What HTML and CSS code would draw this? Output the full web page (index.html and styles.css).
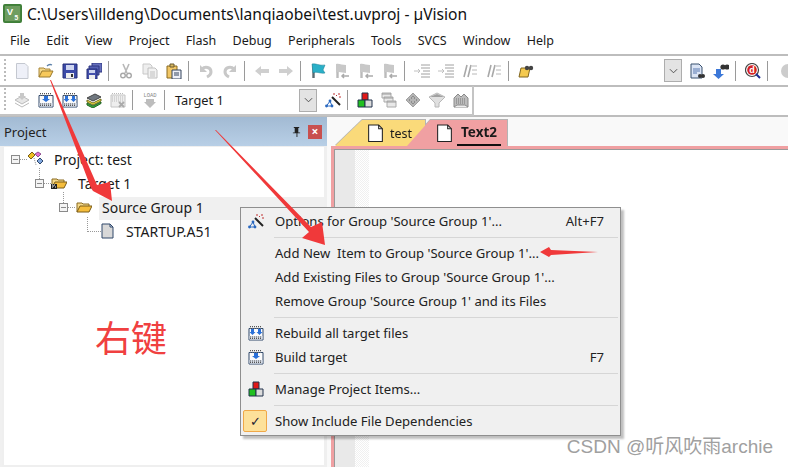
FILE: index.html
```html
<!DOCTYPE html>
<html lang="en">
<head>
<meta charset="utf-8">
<title>µVision</title>
<link rel="stylesheet" href="styles.css">
</head>
<body>
<svg class="defs" width="0" height="0">
  <defs>
    <symbol id="i-new" viewBox="0 0 16 16"><path d="M2.500 .5H11l3 3v12H2.500z" fill="#eef0f8" stroke="#c4c8d0"/></symbol>
    <symbol id="i-open" viewBox="0 0 16 16"><path d="M1 14V5h5l1 1h5v2" fill="#f5d98a" stroke="#a8863a"/><path d="M1 14l3-6h11l-3 6z" fill="#f7c95c" stroke="#9a7a2e"/><path d="M9 3c2-2 3-2 5-1" fill="none" stroke="#5a7fa8" stroke-width="1.300"/></symbol>
    <symbol id="i-save" viewBox="0 0 16 16"><path d="M1 1h14v14H1z" fill="#3c4aa8" stroke="#252f78"/><path d="M4 2h8v5H4z" fill="#cfd6f0"/><path d="M4 10h8v5H4z" fill="#eee"/><path d="M9 11h2v3H9z" fill="#333"/></symbol>
    <symbol id="i-saveall" viewBox="0 0 16 16"><path d="M6 0h10v9H6z" fill="#6670bc" stroke="#2e3680"/><path d="M3 3h10v9H3z" fill="#5560b4" stroke="#2e3680"/><path d="M1 6h10v10H1z" fill="#4450ac" stroke="#252f78"/><path d="M3 7h6v3H3z" fill="#cfd6f0"/><path d="M3 12h6v4H3z" fill="#eee"/></symbol>
    <symbol id="i-cut" viewBox="0 0 16 16"><path d="M5 1l4 9M11 1L7 10" stroke="#b8b8b8" stroke-width="1.600" fill="none"/><circle cx="5" cy="12.500" r="2.300" fill="none" stroke="#a8a8a8" stroke-width="1.400"/><circle cx="11" cy="12.500" r="2.300" fill="none" stroke="#a8a8a8" stroke-width="1.400"/></symbol>
    <symbol id="i-copy" viewBox="0 0 16 16"><path d="M1 1h7l2 2v8H1z" fill="#eee" stroke="#c8c8c8"/><path d="M6 5h7l2 2v8H6z" fill="#f2f2f2" stroke="#c0c0c0"/><path d="M8 9h5M8 11h5M8 13h5" stroke="#c0c0c0"/></symbol>
    <symbol id="i-paste" viewBox="0 0 16 16"><path d="M1 3h10v12H1z" fill="#f2c766" stroke="#8a6a20"/><path d="M4 1h4v3H4z" fill="#d8b860" stroke="#6a5a30"/><path d="M6 7h9v9H6z" fill="#eef0f8" stroke="#32425a"/><path d="M8 10h5M8 12h5" stroke="#32425a"/></symbol>
    <symbol id="i-undo" viewBox="0 0 16 16"><path d="M4 6c3-3 9-2 9 3 0 2-2 4-4 5" fill="none" stroke="#c8c8c8" stroke-width="3"/><path d="M2 2v7h7z" fill="#c8c8c8"/></symbol>
    <symbol id="i-redo" viewBox="0 0 16 16"><path d="M12 6c-3-3-9-2-9 3 0 2 2 4 4 5" fill="none" stroke="#c8c8c8" stroke-width="3"/><path d="M14 2v7H7z" fill="#c8c8c8"/></symbol>
    <symbol id="i-back" viewBox="0 0 16 16"><path d="M1 8l6-5v3h8v4H7v3z" fill="#cfcfcf"/></symbol>
    <symbol id="i-fwd" viewBox="0 0 16 16"><path d="M15 8L9 3v3H1v4h8v3z" fill="#cfcfcf"/></symbol>
    <symbol id="i-flag" viewBox="0 0 16 16"><path d="M3.500 2v13" stroke="#5c6a70" stroke-width="2.400"/><path d="M2 1c4-1 7 2 13 1l-2 5 2 3c-5 1-8-2-12 0z" fill="#2ab0c8" stroke="#1c7c90" stroke-width=".5"/></symbol>
    <symbol id="i-bm" viewBox="0 0 16 16"><path d="M3.500 2v13" stroke="#bbb" stroke-width="2.400"/><path d="M2 1c3-1 6 1 10 1v8c-4 0-7-2-10 0z" fill="#c8c8c8"/><path d="M8 13h7M10 11l-2 2 2 2" stroke="#aaa" stroke-width="1.500" fill="none"/></symbol>
    <symbol id="i-indent" viewBox="0 0 16 16"><path d="M7 2h9M7 5h9M9 8h7M7 11h9M7 14h9" stroke="#a0a0a0"/><path d="M0 8h6M4 6l2 2-2 2" stroke="#c0c0c0" fill="none"/></symbol>
    <symbol id="i-comment" viewBox="0 0 16 16"><path d="M2 14L5 2M6 14L9 2" stroke="#a8a8a8" stroke-width="1.600"/><path d="M10 3h5M10 7h5M10 11h5" stroke="#b8b8b8"/></symbol>
    <symbol id="i-find" viewBox="0 0 16 16"><path d="M1 14l2-9h9l-2 9z" fill="#f4c94e" stroke="#80651e"/><circle cx="9" cy="5" r="2.200" fill="#444"/><circle cx="13" cy="5" r="2.200" fill="#444"/></symbol>
    <symbol id="i-doc" viewBox="0 0 16 16"><path d="M2 1h8l3 3v11H2z" fill="#dbe4f4" stroke="#38506e"/><path d="M4 6h7M4 8h7M4 10h4" stroke="#5878b0"/><circle cx="11" cy="13" r="2" fill="#333"/><circle cx="14" cy="13" r="2" fill="#333"/></symbol>
    <symbol id="i-down" viewBox="0 0 16 16"><path d="M3 6h5v5h3l-5.500 5L0 11h3z" fill="#3c78d8"/><circle cx="10" cy="4" r="2.600" fill="#333"/><circle cx="14" cy="4" r="2.600" fill="#333"/></symbol>
    <symbol id="i-dbg" viewBox="0 0 16 16"><circle cx="7" cy="7" r="6.500" fill="#fff" stroke="#444" stroke-width="1.200"/><circle cx="7" cy="7" r="4.800" fill="#d42020"/><text x="7" y="10" font-size="9" font-weight="700" font-family="Liberation Sans" fill="#fff" text-anchor="middle">d</text><path d="M11 11l4 4" stroke="#1a2a90" stroke-width="2"/></symbol>
    <symbol id="i-gear" viewBox="0 0 16 16"><path d="M1 8l7-4 7 4-7 4z" fill="#e6e6e6" stroke="#bbb"/><path d="M1 11l7 4 7-4" fill="none" stroke="#bbb"/><path d="M6 1h4v3h2L8 8 4 4h2z" fill="#c8c8c8"/></symbol>
    <symbol id="i-build" viewBox="0 0 16 16"><path d="M1 3.500h14V15H1z" fill="#fbfbfb" stroke="#30486a"/><path d="M1.500 11h13v3.500h-13z" fill="#d4dae4"/><path d="M2 12h12M2 13.500h12" stroke="#555" stroke-dasharray="1 1"/><path d="M6 4h4v3h2L8 10 4 7h2z" fill="#2a70d8"/><path d="M2 1.500h12" stroke="#555" stroke-dasharray="1 1"/><path d="M2 3h12" stroke="#999" stroke-dasharray="1 1"/></symbol>
    <symbol id="i-rebuild" viewBox="0 0 16 16"><path d="M1 3.500h14V15H1z" fill="#fbfbfb" stroke="#30486a"/><path d="M1.500 11h13v3.500h-13z" fill="#d4dae4"/><path d="M2 12h12M2 13.500h12" stroke="#555" stroke-dasharray="1 1"/><path d="M3 4h3v3h1.500L4.500 10l-3-3H3z M10 4h3v3h1.500l-3 3-3-3H10z" fill="#2a70d8"/><path d="M2 1.500h12" stroke="#555" stroke-dasharray="1 1"/><path d="M2 3h12" stroke="#999" stroke-dasharray="1 1"/></symbol>
    <symbol id="i-batch" viewBox="0 0 16 16"><path d="M1 6l8-4 6 3-8 4z" fill="#707880" stroke="#444"/><path d="M1 8l6 3 8-4v2l-8 4-6-3z" fill="#f0e040" stroke="#706c20"/><path d="M1 11l6 3 8-4v1.500L7 16l-6-3z" fill="#38b040" stroke="#206020"/></symbol>
    <symbol id="i-stop" viewBox="0 0 16 16"><path d="M1 3h14v12H1z" fill="#eee" stroke="#c4c4c4"/><path d="M2 5h12M2 7h12M2 9h12M2 1.500h12" stroke="#bbb" stroke-dasharray="1 1"/><path d="M9 10l5 5M14 10l-5 5" stroke="#aaa" stroke-width="1.800"/></symbol>
    <symbol id="i-load" viewBox="0 0 16 16"><text x="8" y="5" font-size="5.500" font-family="Liberation Mono" fill="#888" text-anchor="middle">LOAD</text><path d="M4 7h8v3h2l-6 6-6-6h2z" fill="#bdbdbd"/></symbol>
    <symbol id="i-wand" viewBox="0 0 16 16"><path d="M5 9L1.500 14h2h3M5 9l2 5" fill="none" stroke="#2a68c0"/><path d="M7 5l8 8" stroke="#222" stroke-width="2"/><circle cx="5" cy="9" r="1.400" fill="#2a68c0"/><circle cx="1.500" cy="14" r="1.400" fill="#2a68c0"/><circle cx="7" cy="14" r="1.400" fill="#2a68c0"/><path d="M9 1v2M14 1v2M14 5h2M11 3l1 1" stroke="#c03030"/></symbol>
    <symbol id="i-manage" viewBox="0 0 16 16"><path d="M5 1h6v7H5z" fill="#e01818" stroke="#20304a"/><path d="M1 8h7v7H1z" fill="#20c020" stroke="#20304a"/><path d="M8 8h7v7H8z" fill="#dcdcdc" stroke="#20304a"/></symbol>
    <symbol id="i-win" viewBox="0 0 16 16"><path d="M1 1h9v5H1z" fill="#e8e8e8" stroke="#aaa"/><path d="M3 5h9v5H3z" fill="#e8e8e8" stroke="#aaa"/><path d="M6 9h9v6H6z" fill="#e8e8e8" stroke="#aaa"/><path d="M1 2h9M3 6h9M6 10h9" stroke="#999"/></symbol>
    <symbol id="i-dia" viewBox="0 0 16 16"><path d="M8 1l7 7-7 7-7-7z" fill="#b4b4b4" stroke="#a0a0a0"/><path d="M8 4v1M8 11v1M4 8h1M11 8h1M6 6h1M9 6h1M6 10h1M9 10h1" stroke="#666"/></symbol>
    <symbol id="i-fun" viewBox="0 0 16 16"><path d="M0 5l8-4 8 4-6 6v4H6v-4z" fill="#e0e0e0" stroke="#b8b8b8"/><path d="M1 5h14L8 2z" fill="#a0a0a0"/></symbol>
    <symbol id="i-multi" viewBox="0 0 16 16"><path d="M1 15V6l4-4 3 3 3-3 4 4v9z" fill="#bcbcbc" stroke="#8a8a8a"/><path d="M3 7h10M3 9h10M3 11h10" stroke="#777" stroke-dasharray="1 1"/><path d="M1 15l3-2h8l3 2" fill="#eee" stroke="#8a8a8a"/></symbol>
    <symbol id="i-folder" viewBox="0 0 16 16"><path d="M1 13V4h5l1 1h6v2" fill="#f5d98a" stroke="#8a6a20"/><path d="M1 13l3-6h12l-3 6z" fill="#f5bd3c" stroke="#7a5c18"/></symbol>
    <symbol id="i-tgt" viewBox="0 0 16 16"><path d="M1 13V4h5l1 1h6v2" fill="#f5d98a" stroke="#8a6a20"/><path d="M1 13l3-6h12l-3 6z" fill="#f5bd3c" stroke="#7a5c18"/><path d="M0 9h6v5H0z" fill="#222"/><path d="M1 10h1M3 10h1M2 11h1M4 12h1M1 12h1" stroke="#fff"/></symbol>
    <symbol id="i-page" viewBox="0 0 16 18"><path d="M1.500 1H11l3.500 3.500v12h-13z" fill="#fff" stroke="#222"/><path d="M11 1v3.500h3.500" fill="none" stroke="#222"/></symbol>
    <symbol id="i-file" viewBox="0 0 16 16"><path d="M2 1h8l3 3v11H2z" fill="#d8d8d8" stroke="#30486a"/><path d="M10 1v3h3z" fill="#dfe8f8" stroke="#30486a"/></symbol>
    <symbol id="i-proj" viewBox="0 0 16 16"><path d="M1 5l4-4 3 3-4 4z" fill="#f0c020" stroke="#7a5c18"/><path d="M8 3l3-2 3 2-3 3z" fill="#e070d0" stroke="#905090"/><path d="M10 10l3-3 3 3-3 3z" fill="#80a8e0" stroke="#30486a"/><path d="M7 7l2 7" stroke="#888" stroke-dasharray="1 1"/></symbol>
  </defs>
</svg>

<header class="titlebar">
  <svg class="applogo" viewBox="0 0 20 20"><rect width="20" height="20" rx="2" fill="#3f7f38"/><rect x="2" y="2" width="16" height="16" fill="#6f9d60"/><text x="4" y="12" font-size="10" font-weight="700" font-family="Liberation Sans" fill="#fff">V</text><text x="12" y="17" font-size="7" font-weight="700" font-family="Liberation Sans" fill="#fff">5</text></svg>
  <span class="titletext">C:\Users\illdeng\Documents\lanqiaobei\test.uvproj - µVision</span>
</header>

<nav class="menubar">
  <span>File</span><span>Edit</span><span>View</span><span>Project</span><span>Flash</span><span>Debug</span><span>Peripherals</span><span>Tools</span><span>SVCS</span><span>Window</span><span>Help</span>
</nav>

<div class="toolbar t1">
  <i class="grip"></i>
  <svg class="ic"><use href="#i-new"/></svg><svg class="ic"><use href="#i-open"/></svg><svg class="ic"><use href="#i-save"/></svg><svg class="ic"><use href="#i-saveall"/></svg>
  <i class="sep"></i>
  <svg class="ic"><use href="#i-cut"/></svg><svg class="ic"><use href="#i-copy"/></svg><svg class="ic"><use href="#i-paste"/></svg>
  <i class="sep"></i>
  <svg class="ic"><use href="#i-undo"/></svg><svg class="ic"><use href="#i-redo"/></svg>
  <i class="sep"></i>
  <svg class="ic"><use href="#i-back"/></svg><svg class="ic"><use href="#i-fwd"/></svg>
  <i class="sep"></i>
  <svg class="ic"><use href="#i-flag"/></svg><svg class="ic"><use href="#i-bm"/></svg><svg class="ic"><use href="#i-bm"/></svg><svg class="ic"><use href="#i-bm"/></svg>
  <i class="sep"></i>
  <svg class="ic"><use href="#i-indent"/></svg><svg class="ic"><use href="#i-indent"/></svg><svg class="ic"><use href="#i-comment"/></svg><svg class="ic"><use href="#i-comment"/></svg>
  <i class="sep"></i>
  <svg class="ic"><use href="#i-find"/></svg>
  <span class="spring"></span>
  <span class="combo"><svg viewBox="0 0 10 6"><path d="M1 1l4 4 4-4" fill="none" stroke="#444"/></svg></span>
  <span class="gap-a"></span>
  <svg class="ic"><use href="#i-doc"/></svg><svg class="ic"><use href="#i-down"/></svg>
  <i class="sep"></i>
  <svg class="ic"><use href="#i-dbg"/></svg>
  <i class="sep"></i>
  <svg class="ic edge" viewBox="0 0 16 16"><circle cx="11" cy="8" r="7" fill="#ccc"/></svg>
</div>

<div class="toolbar t2">
  <div class="t2box">
    <i class="grip"></i>
    <svg class="ic"><use href="#i-gear"/></svg><svg class="ic"><use href="#i-build"/></svg><svg class="ic"><use href="#i-rebuild"/></svg><svg class="ic"><use href="#i-batch"/></svg><svg class="ic"><use href="#i-stop"/></svg>
    <i class="sep"></i>
    <svg class="ic"><use href="#i-load"/></svg>
    <i class="sep"></i>
    <span class="target">Target 1</span>
    <span class="combo"><svg viewBox="0 0 10 6"><path d="M1 1l4 4 4-4" fill="none" stroke="#444"/></svg></span>
    <span class="gap-b"></span>
    <svg class="ic"><use href="#i-wand"/></svg>
    <i class="sep"></i>
    <svg class="ic"><use href="#i-manage"/></svg><svg class="ic"><use href="#i-win"/></svg><svg class="ic"><use href="#i-dia"/></svg><svg class="ic"><use href="#i-fun"/></svg><svg class="ic"><use href="#i-multi"/></svg>
  </div>
</div>

<main class="workspace">
  <section class="panel">
    <div class="panelhead">
      <span>Project</span>
      <span class="panelbtns">
        <svg class="pin" viewBox="0 0 10 12"><path d="M2 1h6v1H7v5h2v1H6v4H5V8H1V7h2V2H2z" fill="#222"/></svg>
        <span class="close">×</span>
      </span>
    </div>
    <div class="tree">
      <div class="node n0"><i class="box"></i><svg class="nic"><use href="#i-proj"/></svg><span>Project: test</span></div>
      <div class="node n1"><i class="box"></i><svg class="nic"><use href="#i-tgt"/></svg><span>Target 1</span></div>
      <div class="node n2"><i class="box"></i><svg class="nic"><use href="#i-folder"/></svg><span class="selrow">Source Group 1</span></div>
      <div class="node n3"><svg class="nic"><use href="#i-file"/></svg><span>STARTUP.A51</span></div>
    </div>
  </section>
  <section class="docs">
    <div class="tabs">
      <div class="tab tab-y"><svg class="tic"><use href="#i-page"/></svg><span>test</span></div>
      <div class="tab tab-p"><svg class="tic"><use href="#i-page"/></svg><b>Text2</b></div>
    </div>
    <div class="editor"><div class="gut"></div><div class="dither"></div></div>
  </section>
</main>

<div class="ctx">
  <div class="mi"><svg class="mic"><use href="#i-wand"/></svg><span>Options for Group 'Source Group 1'...</span><em>Alt+F7</em></div>
  <hr>
  <div class="mi"><span>Add New&nbsp; Item to Group 'Source Group 1'...</span></div>
  <div class="mi"><span>Add Existing Files to Group 'Source Group 1'...</span></div>
  <div class="mi"><span>Remove Group 'Source Group 1' and its Files</span></div>
  <hr>
  <div class="mi"><svg class="mic"><use href="#i-rebuild"/></svg><span>Rebuild all target files</span></div>
  <div class="mi"><svg class="mic"><use href="#i-build"/></svg><span>Build target</span><em>F7</em></div>
  <hr>
  <div class="mi"><svg class="mic"><use href="#i-manage"/></svg><span>Manage Project Items...</span></div>
  <hr>
  <div class="mi"><i class="check">✓</i><span>Show Include File Dependencies</span></div>
</div>

<svg class="arrows" viewBox="0 0 788 467">
  <path d="M50 80l1 0 46 105 13-3 2 19-19-10-2-3z" fill="#f0393a"/>
  <path d="M215 130l1 0 95 97 11-5 3 23-23-7 7-6z" fill="#f0393a"/>
  <path d="M598 252L551 250l-2-3-9 5 9 5 2-2z" fill="#f0393a"/>
</svg>

<div class="note">右键</div>
<div class="mark">CSDN @听风吹雨archie</div>
</body>
</html>
```

FILE: styles.css
```css
* { box-sizing: border-box; }
html, body { margin: 0; padding: 0; }
body {
  width: 788px;
  height: 467px;
  overflow: hidden;
  position: relative;
  background: #fff;
  color: #1a1a1a;
  font-family: "Noto Sans", "Open Sans", sans-serif;
  font-size: 12px;
}
.defs { position: absolute; }

.titlebar { height: 27px; display: flex; align-items: center; padding-left: 3px; gap: 5px; }
.applogo { width: 19px; height: 19px; }
.titletext { font-size: 15.600px; color: #111; white-space: nowrap; }

.menubar { height: 27px; display: flex; align-items: center; padding-left: 10px; gap: 16.300px; font-size: 12.500px; }

.toolbar { display: flex; align-items: center; border-top: 2px solid #bdbdbd; }
.t1 { height: 31px; padding-left: 4px; overflow: hidden; }
.t2 { height: 32px; border-bottom: 2px solid #bdbdbd; }
.t2box { display: flex; align-items: center; height: 30px; width: 474px; padding-left: 4px; border-right: 2px solid #c4c4c4; border-bottom: 2px solid #c4c4c4; }
.grip { width: 2px; height: 24px; margin-right: 4px; background: repeating-linear-gradient(#bbb 0 2px, transparent 2px 4px); flex: none; }
.ic { width: 16px; height: 16px; margin: 0 4px; flex: none; overflow: visible; }
.edge { margin-right: -5px; }
.sep { width: 1px; height: 20px; background: #9a9a9a; margin: 0 5px 0 2px; flex: none; }
.spring { flex: 1; }
.gap-a { width: 3px; flex: none; }
.gap-b { width: 4px; flex: none; }
.combo { width: 18px; height: 23px; background: #e3e3e3; border: 1px solid #adadad; display: flex; align-items: center; justify-content: center; flex: none; }
.combo svg { width: 9px; height: 6px; }
.target { width: 129px; padding-left: 5px; font-size: 12.800px; flex: none; }

.workspace { display: flex; height: 350px; background: #f0f0f0; }
.panel { width: 327px; display: flex; flex-direction: column; flex: none; }
.panelhead { height: 29px; background: linear-gradient(#a2bad3, #b8cfe6); display: flex; align-items: center; justify-content: space-between; padding: 0 5px 0 4px; font-size: 13px; color: #222; }
.panelbtns { display: flex; align-items: center; gap: 7px; }
.pin { width: 9px; height: 11px; }
.close { width: 14px; height: 14px; background: #c8504f; color: #fff; font-size: 12px; line-height: 13px; text-align: center; font-weight: 700; }
.tree { flex: 1; margin-left: 2px; background: #fff; border: 2px solid #efefef; border-top-width: 1px; border-right-width: 3px; font-size: 14px; }
.node { height: 24px; display: flex; align-items: center; position: relative; }
.n0 { padding-left: 7px; }
.n1 { padding-left: 31px; }
.n2 { padding-left: 55px; }
.n3 { padding-left: 96px; }
.box { width: 9px; height: 9px; border: 1px solid #8a8a8a; background: linear-gradient(#8a8a8a,#8a8a8a) center / 5px 1px no-repeat #f4f4f4; flex: none; margin-right: 7px; position: relative; }
.box::after { content: ""; position: absolute; left: 8px; top: 3px; width: 7px; border-top: 1px dotted #999; }
.n1 .box::before, .n2 .box::before { content: ""; position: absolute; left: 3px; bottom: 8px; height: 11px; border-left: 1px dotted #999; }
.n3::before { content: ""; position: absolute; left: 83px; top: -2px; width: 13px; height: 14px; border-left: 1px dotted #999; border-bottom: 1px dotted #999; }
.nic { width: 16px; height: 16px; flex: none; margin-right: 11px; overflow: visible; }
.n2 .box { margin-right: 8px; }
.n2 .nic { margin-right: 7px; }
.n3 .nic { margin-right: 10px; }
.selrow { background: #f0f0f0; flex: 1; height: 23px; line-height: 21px; padding-left: 3px; margin-top: 2px; }

.docs { flex: 1; padding-left: 4px; background: #f9f9f9; display: flex; flex-direction: column; }
.tabs { height: 29px; display: flex; align-items: flex-end; padding-left: 4px; flex: none; filter: drop-shadow(0 -1px 0 #b4b4b4) drop-shadow(1px 0 0 #b4b4b4); }
.tab { height: 26px; display: flex; align-items: center; font-size: 12.500px; }
.tab-y { width: 90px; background: #fada7a; padding-left: 32px; gap: 6px; clip-path: polygon(27px 0, 100% 0, 100% 100%, 0 100%); }
.tab-p { width: 100px; margin-left: -18px; background: #f0a0a2; padding-left: 29px; gap: 4px; font-size: 13.500px; clip-path: polygon(23px 0, 100% 0, 100% 100%, 0 100%); }
.tab-p b { align-self: stretch; border-bottom: 2px solid #111; padding: 0 4px; line-height: 24px; }
.tic { width: 17px; height: 19px; flex: none; }
.editor { flex: 1; display: flex; border-top: 3px solid #f0a0a2; border-left: 3px solid #f0a0a2; background: #fff; box-shadow: inset 1px 1px 0 #9a9a9a; padding: 1px 0 0 1px; }
.gut { width: 20px; background: #e9e9e9; }
.dither { width: 14px; background: repeating-conic-gradient(#f0f0f0 0 25%, #fff 0 50%) 0 0 / 2px 2px; }

.ctx { position: absolute; left: 240px; top: 207px; width: 381px; height: 229px; background: #f0f0f0; border: 1px solid #8f8f8f; box-shadow: 3px 3px 2px rgba(0,0,0,.25); padding-top: 1px; font-size: 13.100px; color: #222; }
.mi { height: 24px; display: flex; align-items: center; padding: 0 16px 0 34px; position: relative; }
.mi span { flex: 1; white-space: nowrap; }
.mi em { font-style: normal; }
.ctx hr { margin: 4px 2px 3px 33px; border: 0; border-top: 1px solid #d6d6d6; height: 0; }
.mic { position: absolute; left: 7px; top: 4px; width: 16px; height: 16px; overflow: visible; }
.check { position: absolute; left: 2px; top: 1px; width: 24px; height: 22px; background: #fde19a; border: 1px solid #f0a848; border-radius: 2px; text-align: center; font-style: normal; line-height: 20px; color: #223; }

.arrows { position: absolute; inset: 0; width: 788px; height: 467px; pointer-events: none; }
.note { position: absolute; left: 95px; top: 314px; font-family: "Noto Sans CJK SC", sans-serif; font-size: 36px; line-height: 44px; color: #f04040; }
.mark { position: absolute; right: 15px; top: 434px; font-family: "Liberation Sans", "Noto Sans CJK SC", sans-serif; font-size: 19px; line-height: 26px; color: #a0a0a0; white-space: nowrap; }
```
